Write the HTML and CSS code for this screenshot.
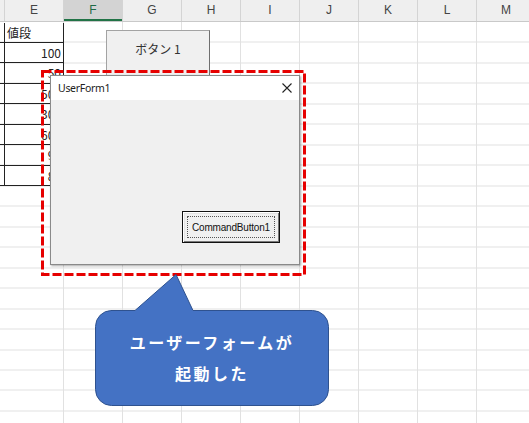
FILE: index.html
```html
<!DOCTYPE html>
<html lang="ja">
<head>
<meta charset="utf-8">
<title>UserForm</title>
<link rel="stylesheet" href="styles.css">
</head>
<body>
<div class="sheet">
  <div class="col-head">
    <div class="h d"></div>
    <div class="h">E</div>
    <div class="h sel">F</div>
    <div class="h">G</div>
    <div class="h">H</div>
    <div class="h">I</div>
    <div class="h">J</div>
    <div class="h">K</div>
    <div class="h">L</div>
    <div class="h">M</div>
  </div>
  <div class="cells">
    <div class="tbl">
      <div></div><div class="txt">値段</div>
      <div></div><div class="num">100</div>
      <div></div><div class="num">50</div>
      <div></div><div class="num">500</div>
      <div></div><div class="num">300</div>
      <div></div><div class="num">600</div>
      <div></div><div class="num">90</div>
      <div></div><div class="num">80</div>
    </div>
  </div>

  <div class="sheet-btn">ボタン 1</div>

  <div class="form">
    <div class="form-title">
      <span class="form-name">UserForm1</span>
      <svg class="close" width="10" height="10" viewBox="0 0 10 10"><path d="M0.5 0.5 L9.5 9.5 M9.5 0.5 L0.5 9.5" stroke="#222" stroke-width="1.1" fill="none"/></svg>
    </div>
    <div class="form-body">
      <div class="cmd"><span class="cmd-focus">CommandButton1</span></div>
    </div>
  </div>

  <svg class="frame" width="265" height="207" viewBox="0 0 265 207">
    <rect x="1.5" y="1.5" width="262" height="203" fill="none" stroke="#e60000" stroke-width="3" stroke-dasharray="9 3"/>
  </svg>

  <div class="callout">
    <svg class="callout-shape" width="234" height="132" viewBox="0 0 234 132">
      <path d="M16 36.5 H40 L81 0.5 L98 36.5 H217.5 A16 16 0 0 1 233.5 52.5 V115.5 A16 16 0 0 1 217.5 131.5 H16.5 A16 16 0 0 1 0.5 115.5 V52.5 A16 16 0 0 1 16.5 36.5 Z" fill="#4472c4" stroke="#2f528f" stroke-width="1"/>
    </svg>
    <div class="callout-text">ユーザーフォームが<br>起動した</div>
  </div>
</div>
</body>
</html>
```
FILE: styles.css
```css
html, body {
  margin: 0;
  padding: 0;
  background: #fff;
}
body {
  width: 529px;
  height: 423px;
  overflow: hidden;
  font-family: "Noto Sans CJK JP", "Liberation Sans", sans-serif;
}
.sheet {
  position: relative;
  width: 529px;
  height: 423px;
  overflow: hidden;
}
.col-head {
  display: flex;
  height: 22px;
  box-sizing: border-box;
  background: #efefef;
  border-bottom: 1px solid #c9c9c9;
}
.col-head .h {
  flex: 0 0 59px;
  box-sizing: border-box;
  border-right: 1px solid #d4d4d4;
  text-align: center;
  font: 12px/21px "Liberation Sans", sans-serif;
  color: #444;
}
.col-head .h.d {
  flex-basis: 5px;
}
.col-head .h.sel {
  background: #d3d3d3;
  color: #1f6b45;
  box-shadow: inset 0 -2px 0 #217346;
}
.cells {
  height: 401px;
  background-image:
    repeating-linear-gradient(to right, transparent 0 58px, #e1e1e1 58px 59px),
    repeating-linear-gradient(to bottom, transparent 0 19.47px, #e1e1e1 19.47px 20.47px);
  background-position: 5px 0, 0 0.5px;
}
.tbl {
  display: grid;
  grid-template-columns: 5px 59px;
  grid-auto-rows: 20.47px;
  width: 64px;
  padding-top: 0.5px;
}
.tbl > div {
  box-sizing: border-box;
  border-right: 1px solid #222;
  border-bottom: 1px solid #222;
  font-size: 12px;
  line-height: 19px;
  color: #222;
  white-space: nowrap;
  overflow: hidden;
}
.tbl .txt {
  padding-left: 2px;
}
.tbl .num {
  text-align: right;
  padding-right: 2px;
}
.sheet-btn {
  position: absolute;
  left: 106px;
  top: 30px;
  width: 104px;
  height: 52px;
  box-sizing: border-box;
  background: #f0f0f0;
  border: 1px solid #a3a3a3;
  border-right-color: #6f6f6f;
  text-align: center;
  font-size: 12px;
  line-height: 36px;
  color: #333;
}
.form {
  position: absolute;
  left: 50px;
  top: 75px;
  width: 250px;
  height: 190px;
  box-sizing: border-box;
  border: 1px solid #8a8a8a;
  background: #f0f0f0;
  box-shadow: 1px 1px 2px rgba(0, 0, 0, 0.35);
  display: flex;
  flex-direction: column;
}
.form-title {
  height: 24px;
  background: #fff;
  display: flex;
  align-items: center;
  justify-content: space-between;
  padding: 0 7px 0 7px;
}
.form-name {
  font: 10.5px "Noto Sans", sans-serif;
  letter-spacing: -0.3px;
  color: #222;
}
.close {
  display: block;
}
.form-body {
  flex: 1;
  display: flex;
  justify-content: flex-end;
  align-items: flex-end;
  padding: 0 19px 21px 0;
}
.cmd {
  width: 98px;
  height: 32px;
  box-sizing: border-box;
  border: 1px solid #111;
  box-shadow: inset 1px 1px 0 #fff, inset -1px -1px 0 #7a7a7a, inset 2px 2px 0 #e3e3e3;
  background: #f0f0f0;
  padding: 4px;
  display: flex;
}
.cmd-focus {
  flex: 1;
  border: 1px dotted #555;
  display: flex;
  align-items: center;
  justify-content: center;
  font: 10px "Liberation Sans", sans-serif;
  letter-spacing: -0.2px;
  color: #111;
}
.frame {
  position: absolute;
  left: 41px;
  top: 70px;
}
.callout {
  position: absolute;
  left: 95px;
  top: 274px;
  width: 234px;
  height: 132px;
}
.callout-shape {
  position: absolute;
  left: 0;
  top: 0;
}
.callout-text {
  position: relative;
  box-sizing: border-box;
  height: 132px;
  padding-top: 36px;
  display: flex;
  align-items: center;
  justify-content: center;
  text-align: center;
  font-size: 16px;
  font-weight: bold;
  letter-spacing: 2.5px;
  line-height: 31px;
  color: #fff;
}
```
